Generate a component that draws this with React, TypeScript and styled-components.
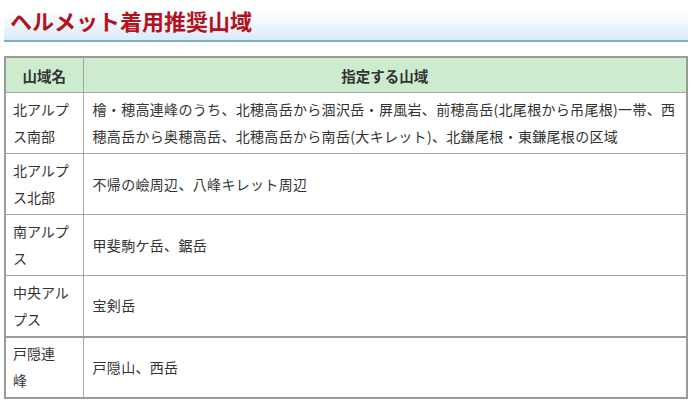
import React from 'react'
import styled, { createGlobalStyle } from 'styled-components'

const GlobalStyle = createGlobalStyle`
  body {
    margin: 0;
    background: #fff;
    font-family: "Noto Sans CJK JP", "Noto Sans", sans-serif;
    color: #333;
  }
`

const Page = styled.div`
  width: 695px;
  padding: 0 0 0 4px;
  box-sizing: border-box;
`

const TitleBar = styled.div`
  width: 684px;
  height: 42px;
  padding: 5px 0 0 6px;
  box-sizing: border-box;
  background: linear-gradient(to bottom, #ffffff 0%, #ffffff 30%, #d9ebf5 100%);
  border-bottom: 2px solid #7ab0c6;
`

const Title = styled.h1`
  margin: 0;
  font-size: 22px;
  line-height: 30px;
  font-weight: bold;
  color: #b3121f;
`

const Table = styled.table`
  margin-top: 14px;
  width: 684px;
  table-layout: fixed;
  border-collapse: collapse;
  border: 2px solid #9a9a9a;
  font-size: 14px;
`

const HeadCell = styled.th`
  background: #cdeccf;
  height: 34px;
  padding: 0;
  font-weight: bold;
  font-size: 14.5px;
  text-align: center;
  color: #333;
  border: 1px solid #a8a8a8;
`

const Row = styled.tr<{ $thick?: boolean }>`
  height: 61px;
  border-top: ${p => (p.$thick ? '2px solid #9a9a9a' : '1px solid #a8a8a8')};
`

const NameCell = styled.td`
  padding: 2px 4px 2px 7px;
  line-height: 27px;
  border: 1px solid #a8a8a8;
  vertical-align: middle;
  white-space: nowrap;
`

const AreaCell = styled.td`
  padding: 2px 4px 2px 9px;
  line-height: 27px;
  border: 1px solid #a8a8a8;
  vertical-align: middle;
  letter-spacing: 0.32px;
  white-space: nowrap;
`

const rows: { name: [string, string]; areas: string[]; thick?: boolean }[] = [
  {
    name: ['北アルプ', 'ス南部'],
    areas: [
      '檜・穂高連峰のうち、北穂高岳から涸沢岳・屏風岩、前穂高岳(北尾根から吊尾根)一帯、西',
      '穂高岳から奥穂高岳、北穂高岳から南岳(大キレット)、北鎌尾根・東鎌尾根の区域',
    ],
  },
  { name: ['北アルプ', 'ス北部'], areas: ['不帰の嶮周辺、八峰キレット周辺'] },
  { name: ['南アルプ', 'ス'], areas: ['甲斐駒ケ岳、鋸岳'] },
  { name: ['中央アル', 'プス'], areas: ['宝剣岳'] },
  { name: ['戸隠連', '峰'], areas: ['戸隠山、西岳'], thick: true },
]

export default function App() {
  return (
    <Page>
      <GlobalStyle />
      <TitleBar>
        <Title>ヘルメット着用推奨山域</Title>
      </TitleBar>
      <Table>
        <colgroup>
          <col style={{ width: 78 }} />
          <col />
        </colgroup>
        <thead>
          <tr>
            <HeadCell>山域名</HeadCell>
            <HeadCell>指定する山域</HeadCell>
          </tr>
        </thead>
        <tbody>
          {rows.map(r => (
            <Row key={r.name.join('')} $thick={r.thick}>
              <NameCell>
                {r.name[0]}
                <br />
                {r.name[1]}
              </NameCell>
              <AreaCell>
                {r.areas.map((a, i) => (
                  <React.Fragment key={i}>
                    {i > 0 && <br />}
                    {a}
                  </React.Fragment>
                ))}
              </AreaCell>
            </Row>
          ))}
        </tbody>
      </Table>
    </Page>
  )
}
